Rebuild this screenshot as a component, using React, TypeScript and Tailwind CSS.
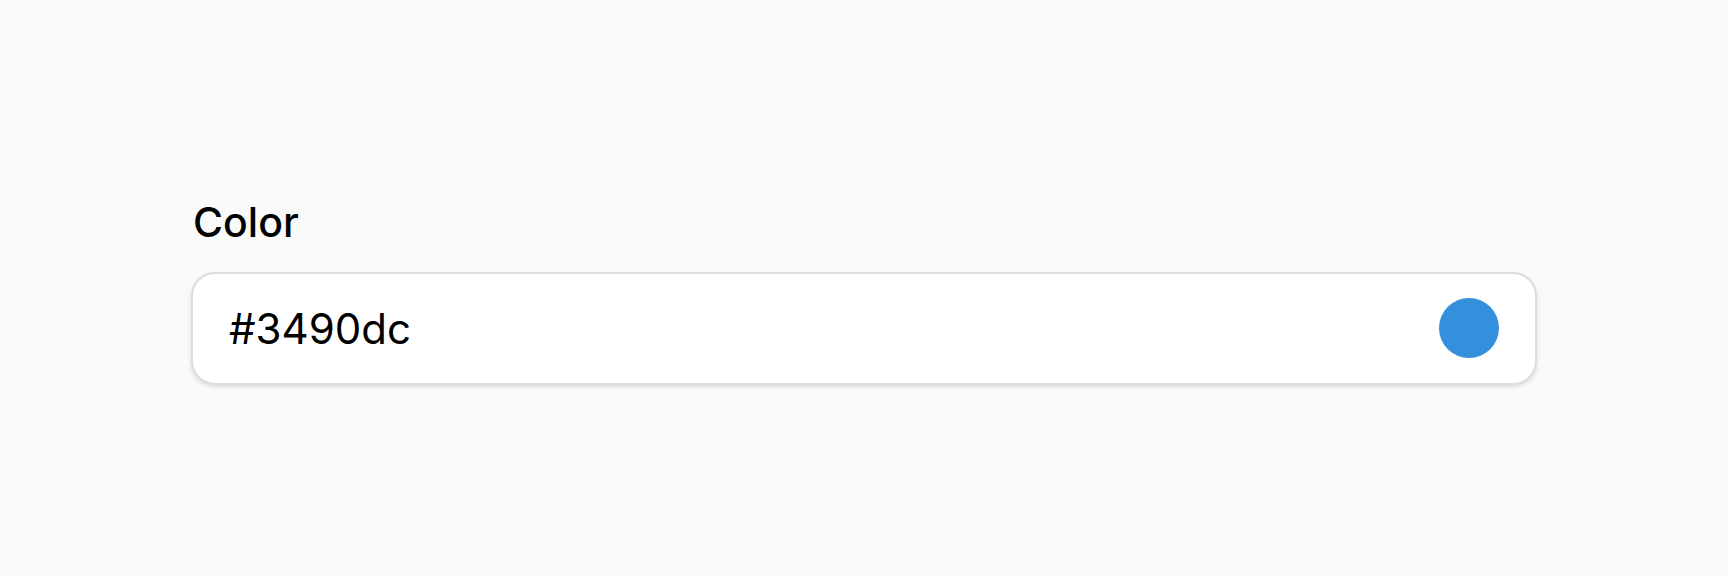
export default function App() {
  return (
    <main className="min-h-screen bg-[#fafafa] flex items-center justify-center pt-[6px] font-['Inter',sans-serif]">
      <div className="w-[1346px] flex flex-col">
        <label className="text-[41px] leading-[48px] font-medium text-black mb-[26px] pl-[2px]">Color</label>
        <div className="h-[113px] bg-white border-2 border-[#dcdcdc] rounded-[24px] shadow-[0_2px_4px_rgba(0,0,0,0.12)] flex items-center justify-between pl-[36px] pr-[36px]">
          <span className="text-[42px] text-black">#3490dc</span>
          <span className="w-[60px] h-[60px] rounded-full bg-[#3490dc]" />
        </div>
      </div>
    </main>
  )
}
